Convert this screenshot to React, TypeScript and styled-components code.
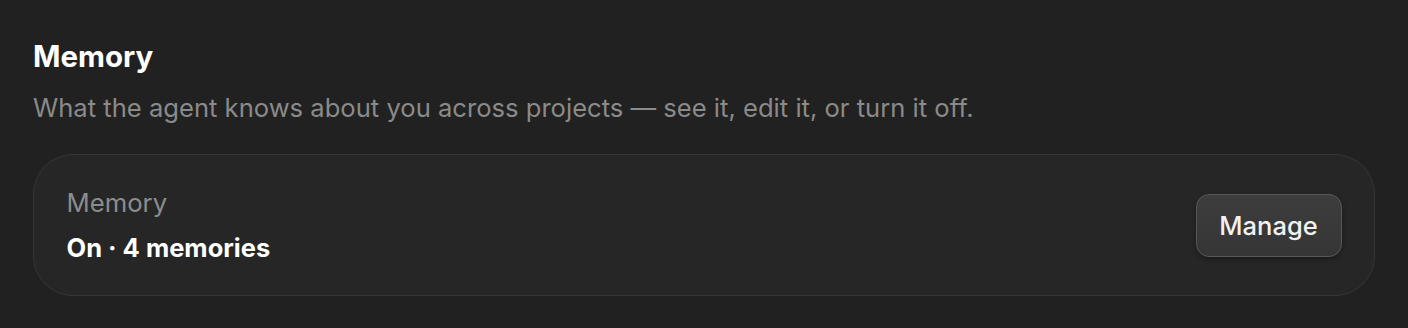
import React from "react";
import styled, { createGlobalStyle } from "styled-components";

const Global = createGlobalStyle`
  html, body { margin: 0; padding: 0; background: #212121; }
  body { font-family: Inter, "Noto Sans", sans-serif; -webkit-font-smoothing: antialiased; }
`;

const Page = styled.div`
  width: 1408px;
  height: 328px;
  box-sizing: border-box;
  padding: 38px 33px 0 33px;
  background: #212121;
  display: flex;
  flex-direction: column;
`;

const Title = styled.h2`
  margin: 0;
  font-size: 29.5px;
  font-weight: 700;
  color: #ffffff;
  line-height: 36px;
`;

const Subtitle = styled.p`
  margin: 17.5px 0 0 0;
  font-size: 25.6px;
  font-weight: 400;
  color: #8a8a8a;
  line-height: 32px;
`;

const Card = styled.div`
  margin-top: 30.5px;
  height: 142px;
  box-sizing: border-box;
  border: 1.5px solid #363636;
  border-radius: 40px;
  background: #262626;
  display: flex;
  align-items: center;
  justify-content: space-between;
  padding: 0 32.5px;
`;

const Info = styled.div`
  display: flex;
  flex-direction: column;
  gap: 13px;
`;

const Label = styled.div`
  font-size: 25.7px;
  color: #8c8c8c;
  line-height: 32px;
`;

const Value = styled.div`
  font-size: 25.5px;
  font-weight: 700;
  color: #ffffff;
  line-height: 32px;
`;

const Button = styled.button`
  font-family: inherit;
  width: 146px;
  height: 63px;
  padding: 0;
  border-radius: 13px;
  border: 1.5px solid #575757;
  background: linear-gradient(#3d3d3d, #353535);
  color: #f2f2f2;
  font-size: 25.5px;
  font-weight: 500;
  box-shadow: 0 2px 4px rgba(0, 0, 0, 0.35);
  cursor: pointer;
`;

export default function App() {
  return (
    <>
      <Global />
      <Page>
        <Title>Memory</Title>
        <Subtitle>What the agent knows about you across projects — see it, edit it, or turn it off.</Subtitle>
        <Card>
          <Info>
            <Label>Memory</Label>
            <Value>On · 4 memories</Value>
          </Info>
          <Button>Manage</Button>
        </Card>
      </Page>
    </>
  );
}
